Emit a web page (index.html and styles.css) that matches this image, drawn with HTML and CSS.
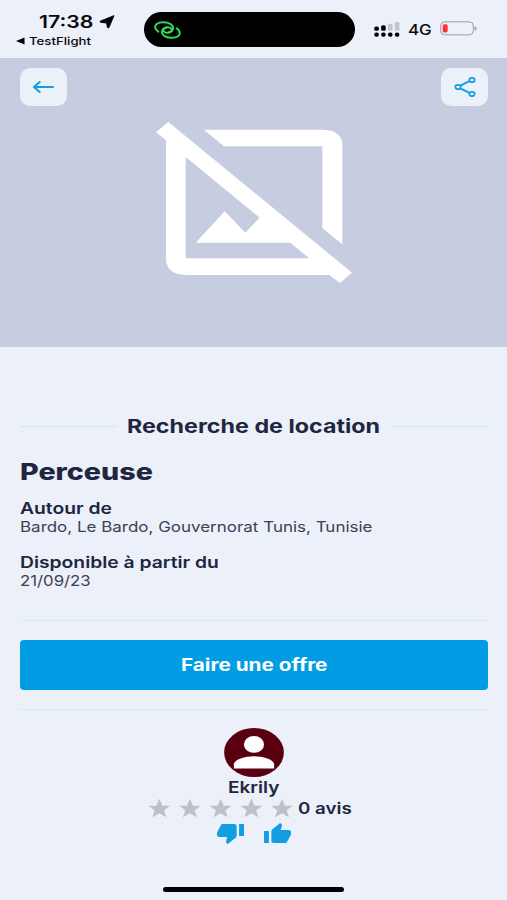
FILE: index.html
```html
<!DOCTYPE html>
<html lang="fr">
<head>
<meta charset="utf-8">
<title>Perceuse</title>
<link rel="stylesheet" href="styles.css">
</head>
<body>
<header class="status">
  <div class="status-left">
    <div class="clock"><span class="wide time">17:38</span>
      <svg class="locate" viewBox="0 0 48 42"><path d="M45 2 30 37Q27 41 25 37L23 24 5 22Q0 20 5 18Z" stroke="#08090c" stroke-width="3" stroke-linejoin="round"/></svg>
    </div>
    <div class="back-app"><svg class="caret" viewBox="0 0 9 8"><path d="M0 4 8.500.5v7z"/></svg><span class="wide app">TestFlight</span></div>
  </div>
  <div class="island">
    <svg class="link" viewBox="0 0 82 54" fill="none" stroke="#35d75b" stroke-width="6" stroke-linecap="round"><path id="loop" d="M13 32C3 26 0 15 9 8 19 1 41 2 52 10 62 18 59 30 48 34 40 37 31 35 29 30 27 25 31 21 37 20"/><use href="#loop" transform="rotate(180 41 27)"/></svg>
  </div>
  <div class="status-right">
    <svg class="signal" viewBox="0 0 78 46"><g fill="#c3c5cb"><rect x="42" y="5" width="14" height="22" rx="4"/><rect x="63" y="0" width="14" height="27" rx="4"/></g><rect y="14" width="14" height="13" rx="5"/><rect x="21" y="10" width="14" height="17" rx="5"/><rect y="32" width="14" height="13" rx="6"/><rect x="21" y="32" width="14" height="13" rx="6"/><rect x="42" y="32" width="14" height="13" rx="6"/><rect x="63" y="32" width="14" height="13" rx="6"/></svg>
    <span class="wide network">4G</span>
    <svg class="battery" viewBox="0 0 111 44"><rect x="2" y="2" width="98" height="39" rx="12" fill="none" stroke="#9b9ca3" stroke-width="3"/><rect x="8" y="9" width="15" height="25" rx="5" fill="#ff302d"/><path d="M104 15q6 1 6 7t-6 7z" fill="#9b9ca3"/></svg>
  </div>
</header>
<section class="hero">
  <div class="actions">
    <button class="tile" aria-label="Retour"><svg class="arrow" viewBox="0 0 63 36"><path d="M60 18H4M20 3 3 18 20 33"/></svg></button>
    <button class="tile" aria-label="Partager"><svg class="share" viewBox="0 0 64 60"><path d="M18 26 44 13M18 34 44 47"/><ellipse cx="11" cy="30" rx="8" ry="6.500"/><ellipse cx="53" cy="9" rx="8" ry="6.500"/><ellipse cx="53" cy="51" rx="8" ry="6.500"/></svg></button>
  </div>
  <svg class="no-image" viewBox="0 0 690 570" fill="#fff"><path fill-rule="evenodd" d="M85 36 636 488 600 519 568 495H137Q78 493 78 445V91L48 67ZM137 141 359 323 316 368 254 304 167 398H451L508 445H137Z"/><path d="M192 59H552Q607 62 607 106V403L547 354V109H252Z"/></svg>
</section>
<main class="content">
  <div class="heading"><i class="rule"></i><h2 class="wide kind">Recherche de location</h2><i class="rule"></i></div>
  <h1 class="wide name">Perceuse</h1>
  <div class="field"><h3 class="wide label around">Autour de</h3><p class="wide value place">Bardo, Le Bardo, Gouvernorat Tunis, Tunisie</p></div>
  <div class="field"><h3 class="wide label from">Disponible à partir du</h3><p class="wide value date">21/09/23</p></div>
  <div class="offer-area"><button class="offer"><span class="wide offer-text">Faire une offre</span></button></div>
  <section class="owner">
    <svg class="avatar" viewBox="0 0 178 146"><ellipse cx="89" cy="73" rx="89" ry="73" fill="#590010"/><ellipse cx="89" cy="49" rx="30" ry="25" fill="#fff"/><path d="M29 121V108C29 94 62 84 89 84s60 10 60 24v13z" fill="#fff"/></svg>
    <span class="wide owner-name">Ekrily</span>
    <div class="rating">
      <svg class="stars" viewBox="0 0 434 58"><defs><path id="star" d="M34 1 43 22 67 22 48 36 55 57 34 45 13 57 20 36 1 22 25 22Z"/></defs><g fill="#bdc1c4"><use href="#star"/><use href="#star" x="91.500"/><use href="#star" x="183.500"/><use href="#star" x="275.500"/><use href="#star" x="367"/></g></svg>
      <span class="wide reviews">0 avis</span>
    </div>
    <div class="votes">
      <svg class="thumb down" viewBox="1 3 22 20" preserveAspectRatio="none"><path d="M15 3H6c-.83 0-1.540.5-1.840 1.220l-3.020 7.050c-.09.23-.14.47-.14.730v2c0 1.100.9 2 2 2h6.310l-.95 4.570-.03.320c0 .41.17.79.44 1.060L9.830 23l6.590-6.590c.36-.36.58-.86.58-1.410V5c0-1.100-.9-2-2-2zm4 0v12h4V3h-4z"/></svg>
      <svg class="thumb" viewBox="1 1 22 20" preserveAspectRatio="none"><path d="M1 21h4V9H1v12zm22-11c0-1.100-.9-2-2-2h-6.310l.95-4.570.03-.32c0-.41-.17-.79-.44-1.060L14.170 1 7.590 7.590C7.220 7.950 7 8.450 7 9v10c0 1.100.9 2 2 2h9c.83 0 1.540-.5 1.840-1.220l3.020-7.050c.09-.23.14-.47.14-.730v-2z"/></svg>
    </div>
  </section>
</main>
<footer class="home"><div class="home-bar"></div></footer>
</body>
</html>
```
FILE: styles.css
```css
* { box-sizing: border-box; margin: 0; padding: 0; }
body { width: 507px; height: 900px; overflow: hidden; display: flex; flex-direction: column; background: #ecf0f9; color: #20263f; font-family: Inter, "Liberation Sans", sans-serif; }
svg { display: block; flex: none; }
button { border: 0; font: inherit; }

/* Lettering is expanded horizontally; each class sets its own factor. */
.wide { display: block; width: max-content; white-space: nowrap; transform: scaleX(var(--stretch, 1.22)); transform-origin: left center; }

.status { height: 58px; display: grid; grid-template-columns: 144px 211px 1fr; align-items: start; color: #08090c; }
.status-left { padding-top: 12px; }
.clock { display: flex; height: 21px; padding-left: 39px; }
.time { --stretch: 1.25; font-size: 17px; line-height: 20px; font-weight: 600; flex: 0 0 60px; }
.locate { width: 16px; height: 14px; margin-top: 3px; }
.back-app { display: flex; padding-left: 16px; }
.caret { width: 9px; height: 8px; margin: 4px 4px 0 0; }
.app { --stretch: 1.2; font-size: 11px; line-height: 16px; font-weight: 500; }
.island { height: 35px; margin-top: 12px; border-radius: 18px; background: #000; padding: 9px 9.500px; }
.link { width: 27px; height: 18px; }
.status-right { display: flex; padding-left: 19px; }
.signal { width: 26px; height: 15px; margin-top: 21.500px; }
.network { --stretch: 1.13; font-size: 15px; line-height: 20px; font-weight: 500; margin: 20px 0 0 8px; flex: 0 0 32px; }
.battery { width: 37px; height: 15px; margin-top: 21px; }

.hero { height: 289px; background: #c6cde1; padding: 10px 19px 0 20px; }
.actions { display: flex; justify-content: space-between; height: 38px; }
.tile { width: 47px; height: 38px; border-radius: 10px; background: #ecf0f9; display: grid; place-items: center; }
.arrow { width: 21px; height: 12px; fill: none; stroke: #139ee2; stroke-width: 6; stroke-linecap: round; }
.share { width: 22px; height: 20px; fill: none; stroke: #139ee2; stroke-width: 5.500; }
.no-image { width: 230px; height: 190px; margin: 4px 0 0 120px; }

.content { padding: 67px 19px 0 20px; flex: 1; }
.heading { display: flex; align-items: center; justify-content: space-between; height: 25px; }
.rule { width: 97px; height: 1px; background: #c9eaf1; }
.kind { --stretch: 1.225; font-size: 19px; font-weight: 700; line-height: 24px; flex: 0 0 254px; }
.name { --stretch: 1.245; font-size: 23px; font-weight: 800; line-height: 30px; margin-top: 18px; }
.field { margin-top: 11px; height: 43px; }
.label { --stretch: 1.205; font-size: 16px; font-weight: 600; line-height: 20px; }
.value { --stretch: 1.17; font-size: 14.500px; line-height: 17px; color: #3c4155; }
.date { --stretch: 1.155; }
.offer-area { margin-top: 25px; padding: 19px 0; border: solid #d3ebf4; border-width: 1px 0; }
.offer { display: block; width: 100%; height: 50px; border-radius: 4px; background: #009de4; color: #fff; padding-left: 161px; }
.offer-text { font-size: 17px; font-weight: 700; line-height: 22px; }
.owner { padding-top: 18px; }
.avatar { width: 60px; height: 49px; margin-left: 204px; }
.owner-name { --stretch: 1.19; font-size: 16px; font-weight: 600; line-height: 20px; margin-left: 208px; }
.rating { display: flex; height: 22px; padding-left: 128px; }
.stars { width: 145px; height: 20px; margin-top: 1px; }
.reviews { --stretch: 1.17; font-size: 16px; line-height: 22px; font-weight: 600; margin-left: 5px; }
.votes { display: flex; gap: 20px; padding: 4px 0 0 197px; }
.thumb { width: 27px; height: 20px; fill: #139ee2; }
.down { margin-top: 1px; }
.home { height: 13px; }
.home-bar { width: 181px; height: 5px; margin-left: 163px; border-radius: 3px; background: #000; }
```
